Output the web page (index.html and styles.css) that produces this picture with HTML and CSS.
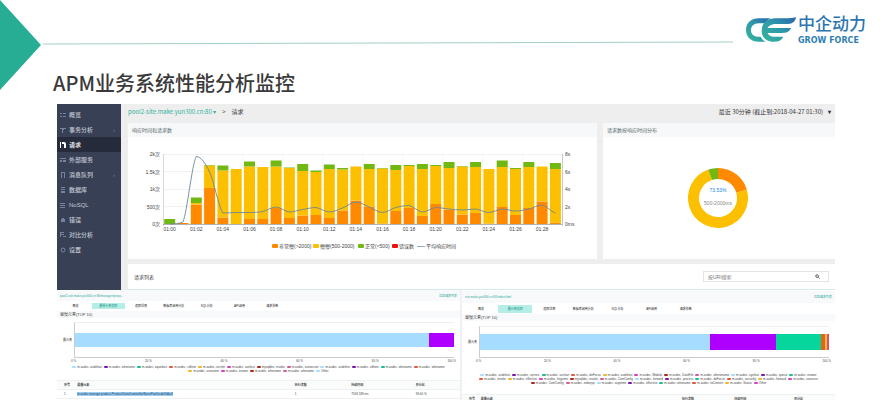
FILE: index.html
```html
<!DOCTYPE html>
<html lang="zh-CN">
<head>
    <meta charset="UTF-8">
    <meta name="viewport" content="width=device-width, initial-scale=1.0">
    <title>APM业务系统性能分析监控</title>
    <link rel="stylesheet" href="styles.css">
</head>
<body>
<div class="slide">
    <header class="head">
        <svg class="arrow" viewBox="0 0 41 90"><path d="M0 0L41 45L0 90Z" fill="#27ad93"/></svg>
        <svg class="rule" viewBox="0 0 690 4" preserveAspectRatio="none"><path d="M0 3L690 1" stroke="#a3cfc8" stroke-width="1"/></svg>
        <div class="logo">
            <svg class="mark" viewBox="0 0 52 26">
                <defs>
                    <linearGradient id="wing" x1="0" y1="1" x2="1" y2="0">
                        <stop offset="0" stop-color="#35b69c"/>
                        <stop offset=".5" stop-color="#2f9aa8"/>
                        <stop offset="1" stop-color="#2767ae"/>
                    </linearGradient>
                </defs>
                <path fill="url(#wing)" d="M25 1H13C5 1 0 6 0 13C0 20 5 25 13 25H20Q16 23 15 20H13C8 20 5 17 5 13C5 9 8 6 13 6H19Q21 3 25 1Z"/>
                <path fill="url(#wing)" d="M51 0C50 5 47 7 41 7H31C26 7 23 9 22 11H46C44 15 41 16 37 16H22C23 19 26 20 30 20H38C36 24 33 25 29 25C20 25 16 20 16 14C16 6 21 1 30 1H42Q47 1 51 0Z"/>
            </svg>
            <div class="brand">
                <span class="brand-cn">中企动力</span>
                <span class="brand-en">GROW FORCE</span>
            </div>
        </div>
    </header>

    <div class="content">
        <h1 class="title">APM业务系统性能分析监控</h1>

        <div class="dash">
            <nav class="side">
                <a href="#"><svg viewBox="0 0 6 6"><path d="M0 1h2v1H0zM3 1h3v1H3zM0 4h2v1H0zM3 4h3v1H3z"/></svg>概览</a>
                <a href="#"><svg viewBox="0 0 6 6"><path d="M0 1h6v1H4v1H3v3H2V2H0z"/></svg>事务分析<i>‹</i></a>
                <a href="#" class="on"><svg viewBox="0 0 6 6"><path d="M0 0h1v6H0zM2 0h2q2 0 2 2v4H4V2H2z"/></svg>请求</a>
                <a href="#"><svg viewBox="0 0 6 6"><path d="M0 1h6v1H0zM0 3h2v2H0zM3 3h3v2H3z"/></svg>外部服务</a>
                <a href="#"><svg viewBox="0 0 6 6"><path d="M1 0h4v6H4V1H2v5H1z"/></svg>消息队列<i>‹</i></a>
                <a href="#"><svg viewBox="0 0 6 6"><path d="M1 0h4v1H1zM1 2h4v1H1zM1 4h4v2H1z"/></svg>数据库</a>
                <a href="#"><svg viewBox="0 0 6 6"><path d="M0 1h5v1H0zM0 3h5v1H0zM0 5h5v1H0z"/></svg>NoSQL</a>
                <a href="#"><svg viewBox="0 0 6 6"><path d="M2 1h2v1h1v3H1V2h1z"/></svg>错误</a>
                <a href="#"><svg viewBox="0 0 6 6"><path d="M0 0h4v1H1v1h3v1H1v2H0zM3 4h3v1H3z"/></svg>对比分析</a>
                <a href="#"><svg viewBox="0 0 6 6"><circle cx="3" cy="3" r="2" fill="none" stroke="#78829a"/></svg>设置</a>
            </nav>
            <main class="main">
                <div class="bar">
                    <a href="#" class="site">pool2-site.make.yun300.cn:80 ▾</a>
                    <span class="sep">&gt;</span>
                    <span>请求</span>
                    <span class="range">最近 30分钟 (截止到:2018-04-27 01:30)<b>▾</b></span>
                </div>
                <div class="cards">
                    <section class="card">
                        <h2>响应时间和请求数</h2>
                        <svg id="chart" class="chart" viewBox="0 0 469 122"></svg>
                    </section>
                    <section class="card">
                        <h2>请求数按响应时间分布</h2>
                        <svg id="donut" class="chart" viewBox="0 0 232 122"></svg>
                    </section>
                </div>
                <div class="list">
                    <span>请求列表</span>
                    <label class="search">
                        <input type="text" placeholder="按URI搜索" aria-label="按URI搜索">
                        <svg viewBox="0 0 6 6"><circle cx="2.500" cy="2.500" r="1.600"/><path d="M4 4L5.500 5.500"/></svg>
                    </label>
                </div>
            </main>
        </div>

        <div class="details">
            <section class="panel panel-a">
                <div class="crumb"><a href="#">pool2-site.make.yun300.cn:80/manager/proxy...</a><a href="#">返回请求列表</a></div>
                <div class="tabs">
                    <button>概览</button><button class="on">最慢元素追踪</button><button>追踪详情</button><button>数据库调用分析</button><button>SQL分析</button><button>API调用</button><button>请求参数</button>
                </div>
                <h3>最慢元素(TOP 10)</h3>
                <div class="stack"><span class="name">最元素</span><div class="plot" id="stackA"></div></div>
                <div class="ticks"><span>0 %</span><span>20 %</span><span>40 %</span><span>60 %</span><span>80 %</span><span>100 %</span></div>
                <ul class="legend" id="legendA"></ul>
                <table class="rows">
                    <tr><th>序号</th><th>最慢元素</th><th>执行次数</th><th>持续时间</th><th>百分比</th></tr>
                    <tr><td>1</td><td><mark>m.asdec.manage.product.ProductDetail/controller/BasePool/asdefJdbc6</mark></td><td>1</td><td>7569.538 ms</td><td>93.60 %</td></tr>
                </table>
            </section>
            <section class="panel panel-b">
                <div class="crumb"><a href="#">site.make.yun300.cn:80/index.html</a><a href="#">返回请求列表</a></div>
                <div class="tabs">
                    <button>概览</button><button class="on">最元素追踪</button><button>追踪详情</button><button>数据库调用分析</button><button>SQL分析</button><button>API调用</button><button>请求参数</button>
                </div>
                <h3>最慢元素(TOP 10)</h3>
                <div class="stack"><span class="name">最元素</span><div class="plot" id="stackB"></div></div>
                <div class="ticks"><span>0 %</span><span>20 %</span><span>40 %</span><span>60 %</span><span>80 %</span><span>100 %</span></div>
                <ul class="legend" id="legendB"></ul>
                <table class="rows">
                    <tr><th>序号</th><th>最慢元素</th><th>执行次数</th><th>持续时间</th><th>百分比</th></tr>
                </table>
            </section>
        </div>
    </div>
</div>
<script src="script.js"></script>
</body>
</html>
```

FILE: styles.css
```css
* { box-sizing: border-box; }

body {
    margin: 0;
    background: #fff;
    font-family: "Liberation Sans", "Noto Sans CJK SC", sans-serif;
    color: #444;
}

a { color: inherit; text-decoration: none; }
svg { display: block; }

.slide { height: 100vh; overflow: hidden; }

/* header */
.head { display: flex; align-items: center; height: 90px; padding-right: 24px; }
.arrow { width: 41px; height: 90px; flex: none; }
.rule { flex: 1; height: 4px; margin: 0 13px 4px 2px; }
.logo { display: flex; align-items: center; gap: 1px; margin-bottom: 30px; }
.mark { width: 51px; height: 26px; }
.brand { display: flex; flex-direction: column; gap: 3px; width: 67px; }
.brand-cn {
    font: 500 17px/18px "Liberation Sans", "Noto Sans CJK SC", sans-serif;
    color: #2b76b0;
    white-space: nowrap;
}
.brand-en { font: bold 8px/8px "DejaVu Sans", sans-serif; color: #2e80b3; white-space: nowrap; }

.content { margin: -20px 54px 0 57px; }
.title {
    margin: 0 0 8px -4px;
    font-family: "Noto Sans CJK SC", sans-serif;
    font-size: 20px;
    line-height: 26px;
    font-weight: 500;
    color: #3a3a3a;
}

/* dashboard */
.dash { display: flex; background: #eee; }
.side { width: 64px; background: #374055; padding-top: 3px; flex: none; }
.side a {
    display: flex;
    align-items: center;
    height: 15px;
    padding: 0 6px 0 3px;
    font-size: 6px;
    font-weight: 500;
    color: #c3c9d4;
}
.side svg { width: 6px; height: 6px; margin-right: 3px; fill: #78829a; }
.side i { margin-left: auto; font-style: normal; color: #7b8497; }
.side .on { background: #252b3a; color: #fff; }
.side .on svg { fill: #fff; }

.main { flex: 1; padding-left: 7px; min-width: 0; }
.bar {
    display: flex;
    align-items: center;
    height: 19px;
    padding: 0 4px 4px 0;
    gap: 6px;
    font-family: "Noto Sans CJK SC", sans-serif;
    font-size: 6px;
}
.site { color: #2fb19d; }
.range { margin-left: auto; color: #333; }
.range b { margin-left: 5px; }
.cards { display: grid; grid-template-columns: 469fr 232fr; gap: 6px; }
.card { background: #fff; }
.card h2 {
    margin: 0;
    padding-left: 4px;
    background: #f7f8f9;
    font-size: 5px;
    line-height: 14px;
    font-weight: normal;
    color: #56676b;
}
.chart { width: 100%; height: auto; }
.chart text { font-size: 5px; fill: #444; }
.chart .pct { fill: #1689dc; }
.chart .span { fill: #888; }

.list {
    display: flex;
    align-items: center;
    justify-content: space-between;
    height: 26px;
    margin-top: 5px;
    padding: 0 6px;
    background: #fff;
    border-bottom: 1px solid #d5e9e8;
    font-size: 5px;
}
.search { display: flex; align-items: center; width: 126px; height: 11px; padding: 0 8px 0 4px; border: 1px solid #e4e4e4; }
.search input { flex: 1; min-width: 0; padding: 0; border: 0; outline: 0; font: inherit; }
.search input::placeholder { color: #777; }
.search svg { width: 5px; height: 5px; fill: none; stroke: #444; }

/* detail panels */
.details { display: grid; grid-template-columns: 403fr 373fr; gap: 2px; background: #edf1f5; font-size: 3px; }
.panel { background: #fff; min-width: 0; }
.crumb { display: flex; justify-content: space-between; align-items: center; height: 11px; padding: 0 3px; background: #f7f9fa; color: #2fa99c; }
.tabs { display: grid; grid-template-columns: repeat(7, 1fr); align-items: center; height: 10px; width: 57%; margin-left: 2px; }
.tabs button { height: 6px; padding: 0; border: 0; background: none; font: inherit; line-height: 6px; color: #222; white-space: nowrap; }
.tabs .on { background: #b4eee6; color: #279486; }
.panel h3 { margin: 0; padding-left: 3px; font-size: 4px; line-height: 7px; font-weight: normal; background: #f7f9fa; }
.stack { display: flex; align-items: center; margin-top: 4px; padding-right: 6px; }
.name { width: 17px; padding-right: 2px; text-align: right; flex: none; }
.plot { display: flex; flex: 1; padding: 10px 0; height: 36px; border: solid #ccc; border-width: 0 0 1px 1px; border-top: 1px solid #f2eeee; }
.ticks { display: flex; justify-content: space-between; padding: 0 4px 0 14px; line-height: 6px; }
.legend {
    display: flex;
    flex-wrap: wrap;
    justify-content: center;
    gap: 0 2px;
    margin: 1px 0 0;
    padding: 0 10px;
    list-style: none;
    line-height: 4px;
}
.legend li { display: flex; align-items: center; gap: 1px; white-space: nowrap; }
.legend i { width: 4px; height: 2px; border-radius: 1px; }
.rows { width: 100%; border-collapse: collapse; table-layout: fixed; }
.rows th, .rows td { padding: 0; height: 9px; text-align: left; border: solid #eef0f1; border-width: 1px 0; white-space: nowrap; }
.rows th { background: #fafbfb; }
.rows th:first-child { width: 5%; }
.rows th:nth-child(2) { width: 54%; }
.rows th:nth-child(3) { width: 14%; }
.rows th:nth-child(4) { width: 16%; }
.rows th:first-child, .rows td:first-child { padding-left: 7px; }
.rows mark { background: #9ccbf5; color: #245; }

.panel-a .legend { padding: 0 12px; }
.panel-a .rows { margin-top: 7px; }
.panel-b { padding-top: 1px; }
.panel-b .crumb { height: 12px; }
.panel-b .tabs { height: 11px; width: 64%; }
.panel-b .tabs button { height: 8px; }
.panel-b .stack { margin-top: 5px; }
.panel-b .plot { height: 32px; padding: 7px 0; }
.panel-b .legend { margin-top: 9px; }
.panel-b .rows { margin-top: 9px; }
```

FILE: script.js
```js
// [orange, yellow, green] tops of each stacked bar, 35 units = 1k requests
var bars = [
    [0, 0, 5], [1, 1, 1], [19.5, 21, 26.5], [36, 58.5, 59], [6.5, 53.5, 58.5], [0, 55, 55],
    [5, 57.5, 62.5], [5, 57, 57], [16, 57.5, 63.5], [6, 56, 56.5], [8.5, 53, 60], [9, 52, 53.5],
    [6, 55, 59.5], [13.5, 54.5, 56], [23.5, 57.5, 57.5], [17.5, 55, 60], [0.5, 55.5, 56],
    [13, 54, 59], [16, 58, 59], [8, 55, 60], [20, 58, 59], [14.5, 56, 62], [9.5, 57.5, 58],
    [11, 57, 62], [0.5, 55, 55], [17, 57, 63.5], [9, 55, 56], [16, 57, 62], [22.5, 57.5, 57.5], [1.5, 55, 61]
];
var avg = [0, 2, 67.5, 52, 11, 11.5, 11.5, 12.5, 17, 12, 14.5, 16.5, 12, 16, 22, 17, 11.5, 16.5, 18.5, 12, 16.5, 15, 14, 15, 11.5, 15, 13, 15, 19, 11];
var colors = ['#ff8a00', '#fcc000', '#72b812'];

var left = 35, base = 87, step = 13.3;
var out = '';

function rect(x, y, w, h, fill) {
    return '<rect x="' + x + '" y="' + y + '" width="' + w + '" height="' + h + '" fill="' + fill + '"/>';
}

function text(x, y, s, anchor) {
    return '<text x="' + x + '" y="' + y + '" text-anchor="' + anchor + '">' + s + '</text>';
}

// grid and axes
['0次', '500次', '1k次', '1.5k次', '2k次'].forEach(function (s, i) {
    var y = base - i * 17.5;
    out += rect(left, y, 399, 0.5, '#e5e5e5') + text(left - 3, y + 2, s, 'end');
    out += text(left + 402, y + 2, i ? i * 2 + 's' : '0ms', 'start');
});
for (var g = 0; g <= 30; g += 3) {
    out += rect(left + g * step, base - 70, 0.5, 72, '#eee');
}
out += rect(left, base - 70, 0.5, 72, '#bbb') + rect(left + 399, base - 70, 0.5, 72, '#999');

bars.forEach(function (b, i) {
    var from = 0;
    b.forEach(function (top, k) {
        if (top > from) {
            out += rect(left + i * step + 1.2, base - top, 11, top - from, colors[k]);
            from = top;
        }
    });
    if (i % 2 === 0) {
        out += text(left + (i + 0.5) * step, base + 7, '01:' + (i < 10 ? '0' + i : i), 'middle');
    }
});
out += rect(left, base, 399, 0.6, '#888');

// smooth average line, control points kept between the two values they join
var pts = avg.map(function (v, i) { return [left + (i + 0.5) * step, base - v]; });
function between(v, a, b) {
    return Math.max(Math.min(a, b), Math.min(Math.max(a, b), v));
}
var d = 'M' + pts[0];
for (var i = 1; i < pts.length; i++) {
    var p0 = pts[Math.max(i - 2, 0)], p1 = pts[i - 1], p2 = pts[i], p3 = pts[Math.min(i + 1, pts.length - 1)];
    var c1y = between(p1[1] + (p2[1] - p0[1]) / 6, p1[1], p2[1]);
    var c2y = between(p2[1] - (p3[1] - p1[1]) / 6, p1[1], p2[1]);
    d += 'C' + (p1[0] + step / 3) + ' ' + c1y + ' ' + (p2[0] - step / 3) + ' ' + c2y + ' ' + p2;
}
out += '<path d="' + d + '" fill="none" stroke="#6b8795" stroke-width="0.9"/>';

[[144, '#ff8a00', '非常慢(>2000)'], [185, '#fcc000', '慢慢(500-2000)'], [230, '#72b812', '正常(<500)'], [264, '#f00f0f', '错误数']].forEach(function (l) {
    out += '<rect x="' + l[0] + '" y="107" width="6" height="4" rx="1" fill="' + l[1] + '"/>' + text(l[0] + 7, 111, l[2].replace('<', '&lt;'), 'start');
});
out += rect(289, 109, 8, 0.8, '#6f96b8') + text(298, 111, '平均响应时间', 'start');
document.getElementById('chart').innerHTML = out;

// donut
function arc(a, b, color) {
    var r = 24.5, t = Math.PI * 2;
    var x = function (v) { return 115 + r * Math.sin(v * t); };
    var y = function (v) { return 61 - r * Math.cos(v * t); };
    return '<path fill="none" stroke-width="11" stroke="' + color + '" d="M' + x(a) + ' ' + y(a) +
        'A' + r + ' ' + r + ' 0 ' + (b - a > 0.5 ? 1 : 0) + ' 1 ' + x(b) + ' ' + y(b) + '"/>';
}
document.getElementById('donut').innerHTML =
    arc(0, 0.205, colors[0]) + arc(0.205, 0.948, colors[1]) + arc(0.948, 1, colors[2]) +
    '<text class="pct" x="115" y="55" text-anchor="middle">73.53%</text>' +
    '<text class="span" x="115" y="68" text-anchor="middle">500-2000ms</text>';

// stacked bars
function stack(id, parts) {
    document.getElementById(id).innerHTML = parts.map(function (p) {
        return '<span style="width:' + p[0] + '%;background:' + p[1] + '"></span>';
    }).join('');
}
stack('stackA', [[93.5, '#a5dcff'], [6.5, '#ae00ff']]);
stack('stackB', [[66, '#a5dcff'], [18.8, '#ae00ff'], [13, '#06d69b'], [1, '#e0661c'], [0.6, '#ffb52e'], [0.6, '#d2527f']]);

function legend(id, names) {
    var c = ['#a5dcff', '#7d12b5', '#12c295', '#e8553a', '#f0b429', '#d63ec4', '#b3261e', '#d45a9a'];
    document.getElementById(id).innerHTML = names.map(function (n, i) {
        return '<li><i style="background:' + c[i % c.length] + '"></i>' + n + '</li>';
    }).join('');
}
legend('legendA', ['m.asdec, asdefout', 'm.asdec, whename', 'm.asdec, aqueduct', 'm.asdec, cdhine', 'm.asdec, servlet', 'm.asdec, asefout', 'mysqldec, invoke', 'm.asdec, asexecute', 'm.asdec, asdefine', 'm.asdec, cdhine', 'm.asdec, whename', 'm.asdec, whename', 'm.asdec, asename', 'm.asdec, ename', 'm.asdec, whename', 'm.asdec, whename', 'Other']);
legend('legendB', ['m.asdec, asdefout', 'm.asdec, service', 'm.asdec, aschart', 'm.asdec, doFocus', 'm.asdec, asdefout', 'm.asdec, Module', 'm.asdec, DataFile', 'm.asdec, wherename', 'm.asdec, cgefout', 'm.asdec, queue', 'm.asdec, ename', 'm.asdec, invoke', 'm.asdec, effective', 'm.asdec, hegame', 'mysqldec, invoke', 'm.asdec, ComConfig', 'm.asdec, forward', 'm.asdec, process', 'm.asdec, doFocus', 'm.asdec, asconfig', 'm.asdec, forward', 'm.asdec, resource', 'm.asdec, ComConfig', 'm.asdec, indexjsp', 'm.asdec, asgetme', 'm.asdec, effective', 'm.asdec, whename', 'm.asdec, toConvert', 'm.asdec, Status', 'Other']);
```
